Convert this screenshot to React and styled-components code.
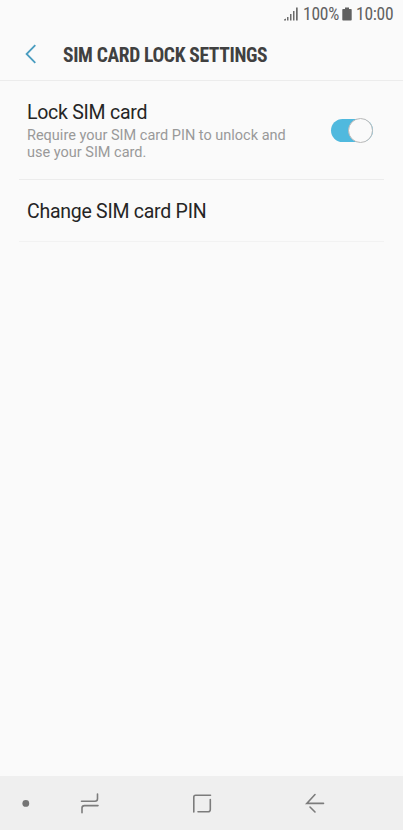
// App.jsx
import React, { useState } from "react";
import styled, { createGlobalStyle } from "styled-components";

const GlobalStyle = createGlobalStyle`
  * { box-sizing: border-box; }

  body {
    margin: 0;
    background: #fafafa;
    font-family: Roboto, "Liberation Sans", sans-serif;
  }
`;

const Screen = styled.div`
  display: flex;
  flex-direction: column;
  width: 403px;
  height: 830px;
  background: #fafafa;
  overflow: hidden;
`;

const StatusBar = styled.div`
  display: flex;
  align-items: center;
  justify-content: flex-end;
  height: 28px;
  padding-right: 10px;
  color: #616161;
  font: 400 17.5px/28px "Roboto Condensed", Roboto, sans-serif;
  font-stretch: 75%;
  letter-spacing: -.25px;

  svg { display: block; flex: none; }
`;

const StatusText = styled.span`
  width: ${({ $width }) => $width}px;
  margin-left: ${({ $gap }) => $gap}px;
  white-space: nowrap;
`;

const Header = styled.header`
  display: flex;
  align-items: center;
  height: 53px;
  padding-left: 24px;
  border-bottom: 1px solid #ececec;
`;

const BackButton = styled.button`
  width: 39px;
  padding: 0;
  border: none;
  background: transparent;
  line-height: 0;
  text-align: left;
`;

const Title = styled.h1`
  margin: 3px 0 0;
  color: #404040;
  font: 700 19.5px/24px "Roboto Condensed", Roboto, sans-serif;
  font-stretch: 75%;
  letter-spacing: -.34px;
  white-space: nowrap;
`;

const List = styled.main`
  flex: 1;
  padding: 0 19px;
`;

const Row = styled.div`
  display: flex;
  align-items: center;
  justify-content: space-between;
  height: ${({ $height }) => $height}px;
  padding: 0 11px 0 8px;
  border-bottom: 1px solid ${({ $line }) => $line};
`;

const Label = styled.div`
  padding-top: ${({ $top }) => $top}px;
  color: #252525;
  font-size: 19.5px;
  line-height: 24px;
  letter-spacing: -.26px;
`;

const Hint = styled.div`
  width: 275px;
  margin-top: 2px;
  color: #999;
  font-size: 14.5px;
  line-height: 17px;
  white-space: pre-line;
`;

const Track = styled.button`
  display: flex;
  align-items: center;
  justify-content: ${({ $on }) => ($on ? "flex-end" : "flex-start")};
  width: 42px;
  height: 23px;
  padding: 0;
  border: none;
  border-radius: 12px;
  background: ${({ $on }) => ($on ? "#50b9de" : "#c8c8c8")};
`;

const Knob = styled.span`
  flex: none;
  width: 25px;
  height: 25px;
  border: 1px solid #b9b9b9;
  border-radius: 50%;
  background: #fafafa;
`;

const NavBar = styled.nav`
  display: grid;
  grid-template-columns: 33px 113px 112px 1fr;
  align-items: center;
  height: 54px;
  background: #efefef;

  svg { display: block; }
`;

const NavItem = styled.div`
  padding-left: ${({ $inset }) => $inset}px;
`;

function NavIcon({ children }) {
  return (
    <svg width="24" height="24" viewBox="0 0 24 24" fill="none" stroke="#7c7c7c" strokeWidth="1.6" strokeLinecap="round">
      {children}
    </svg>
  );
}

export default function App() {
  const [locked, setLocked] = useState(true);

  return (
    <Screen>
      <GlobalStyle />
      <StatusBar>
        <svg width="15" height="14" viewBox="0 0 15 14" fill="#6c6c6c">
          <path d="M0 13.5v-1l2-1v2zM3 10h1.5v3.5H3zM6 7h1.5v6.5H6zM9 4h1.5v9.5H9zM12 .5h1.7v13H12z" />
        </svg>
        <StatusText $width={39} $gap={4}>100%</StatusText>
        <svg width="10" height="14" viewBox="0 0 10 14" fill="#616161">
          <path d="M3 .5h4V2h2q.7 0 .7.7v10q0 .7-.7.7H1q-.7 0-.7-.7v-10Q.3 2 1 2h2z" />
        </svg>
        <StatusText $width={37} $gap={4}>10:00</StatusText>
      </StatusBar>

      <Header>
        <BackButton aria-label="Back">
          <svg width="14" height="20" viewBox="0 0 14 20" fill="none">
            <path d="M11.3 1.2L2.6 10L11.3 18.8" stroke="#4a9dc0" strokeWidth="1.8" />
          </svg>
        </BackButton>
        <Title>SIM CARD LOCK SETTINGS</Title>
      </Header>

      <List>
        <Row $height={99} $line="#ececec">
          <div>
            <Label $top={1}>Lock SIM card</Label>
            <Hint>{"Require your SIM card PIN to unlock and\nuse your SIM card."}</Hint>
          </div>
          <Track $on={locked} role="switch" aria-checked={locked} aria-label="Lock SIM card" onClick={() => setLocked(!locked)}>
            <Knob />
          </Track>
        </Row>
        <Row $height={62} $line="#f2f2f2">
          <Label $top={3}>Change SIM card PIN</Label>
        </Row>
      </List>

      <NavBar>
        <NavItem $inset={14}>
          <NavIcon>
            <circle cx="11.8" cy="12.4" r="3.4" fill="#757575" stroke="none" />
          </NavIcon>
        </NavItem>
        <NavItem $inset={45}>
          <NavIcon>
            <path d="M3.5 10.3H17q2.5 0 2.5-2.5V3M20 14.6H6.5q-2.5 0-2.5 2.5V21.8" />
          </NavIcon>
        </NavItem>
        <NavItem $inset={44}>
          <NavIcon>
            <path d="M20.5 4.3H5.5q-1.7 0-1.7 1.7V21M20.3 8.5v10q0 2.3-2.3 2.3H8" />
          </NavIcon>
        </NavItem>
        <NavItem $inset={45}>
          <NavIcon>
            <path d="M12 3.5L3.8 12.4H20.5M7 16L12 21" />
          </NavIcon>
        </NavItem>
      </NavBar>
    </Screen>
  );
}
